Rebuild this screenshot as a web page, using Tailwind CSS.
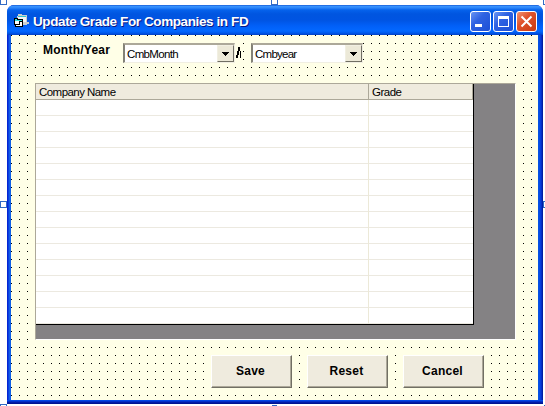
<!DOCTYPE html>
<html lang="en">
<head>
<meta charset="utf-8">
<title>Update Grade For Companies in FD</title>
<script src="https://cdn.jsdelivr.net/npm/@tailwindcss/browser@4"></script>
</head>
<body class="bg-white overflow-hidden text-black">
<div class="relative w-[545px] h-[406px] overflow-hidden pl-[7px] pt-[5px] font-['Liberation_Sans',sans-serif]">
  <!-- designer selection handles -->
  <i class="absolute left-0 -top-[2px] size-[7px] border border-[#316ac5] bg-white"></i>
  <i class="absolute left-[271px] -top-[2px] size-[7px] border border-[#316ac5] bg-white"></i>
  <i class="absolute left-[543px] -top-[2px] size-[7px] border border-[#316ac5] bg-white"></i>
  <i class="absolute left-0 top-[201px] size-[7px] border border-[#316ac5] bg-white"></i>
  <i class="absolute left-[543px] top-[201px] size-[7px] border border-[#316ac5] bg-white"></i>
  <i class="absolute left-0 top-[404px] size-[7px] border border-[#316ac5] bg-white"></i>
  <i class="absolute left-[272px] top-[405px] w-[5px] h-px bg-[#316ac5]"></i>
  <i class="absolute left-[544px] top-[405px] size-px bg-[#316ac5]"></i>

  <div class="relative w-[536px] h-[399px] rounded-t-[7px] overflow-hidden bg-[#0831d9] flex flex-col">
    <header class="h-[30px] shrink-0 flex items-center pl-[7px] pr-[6px] bg-[linear-gradient(to_bottom,#0a48c8_0px,#3c96ff_1px,#2a83f8_3px,#0562ec_5px,#0055e0_9px,#0054e2_15px,#0160f8_21px,#0368ff_26px,#0058ec_28px,#0240c4_30px)]">
      <svg class="w-[15px] h-[14px] shrink-0 mt-[2px]" viewBox="0 0 15 14" shape-rendering="crispEdges">
        <path d="M4 0h4v1h5v7h2v2h-2v1H8V8H3V2h1z" fill="#c8ced0"/>
        <path d="M4 2h8v1H4z" fill="#30c8d0"/>
        <path d="M4 3h8v5H4z" fill="#f4f4f4"/>
        <path d="M0 4h4v1h5v8H1V11H0z" fill="#000"/>
        <path d="M1 5h2v1h5v1H1z" fill="#30e0e0"/>
        <path d="M1 7h4v3H1zM6 8h2v4H2v-1h4z" fill="#fff"/>
      </svg>
      <h1 class="ml-[4px] mt-[4px] text-white font-bold text-[13.5px] leading-[18px] whitespace-nowrap [text-shadow:1px_1px_0_#0a1883] w-[220px] tracking-[-0.4px]">Update Grade For Companies in FD</h1>
      <div class="ml-auto flex gap-[2px] mt-[3px]">
        <svg class="w-[21px] h-[21px]" viewBox="0 0 21 21"><defs><linearGradient id="b" x2="1" y2="1"><stop stop-color="#6d98f4"/><stop offset=".4" stop-color="#2f62e2"/><stop offset="1" stop-color="#1c4fd6"/></linearGradient><linearGradient id="r" x2="1" y2="1"><stop stop-color="#f09878"/><stop offset=".4" stop-color="#e0532c"/><stop offset="1" stop-color="#c83a10"/></linearGradient></defs><rect x=".5" y=".5" width="20" height="20" rx="2.5" fill="url(#b)" stroke="#fff"/><path d="M5 13h7v3H5z" fill="#fff"/></svg>
        <svg class="w-[21px] h-[21px]" viewBox="0 0 21 21"><rect x=".5" y=".5" width="20" height="20" rx="2.5" fill="url(#b)" stroke="#fff"/><path d="M5 5h11v11H5zM6 8v7h9V8z" fill="#fff" fill-rule="evenodd"/></svg>
        <svg class="w-[21px] h-[21px]" viewBox="0 0 21 21"><rect x=".5" y=".5" width="20" height="20" rx="2.5" fill="url(#r)" stroke="#fff"/><path d="M5.5 5.5l10 10M15.5 5.5l-10 10" stroke="#fff" stroke-width="2"/></svg>
      </div>
    </header>

    <div class="flex h-[369px] pb-[4px] px-[4px] bg-[linear-gradient(to_right,#0019cf_0px,#0831d9_1px,#166aee_3px,#0855dd_4px,#0855dd_531px,#0450e8_532px,#0838d8_534px,#001590_536px)]">
      <main class="w-[527px] h-[365px] bg-[#ffffe7] relative">
        <svg class="absolute inset-0 w-[527px] h-[365px]" shape-rendering="crispEdges"><defs><pattern id="d" width="8" height="8" patternUnits="userSpaceOnUse"><rect width="1" height="1"/></pattern></defs><rect width="527" height="365" fill="url(#d)"/></svg>
        <div class="relative pl-[25px] pt-[8px]">
          <div class="flex h-[20px] w-[327px]">
            <label class="w-[87px] pl-[7px] bg-[#ffffe7] text-[12px] font-bold leading-[14px] whitespace-nowrap tracking-[0.25px]">Month/Year</label>
            <div class="w-[112px] h-[20px] bg-white border-t-2 border-l-2 border-b border-r border-t-[#aca899] border-l-[#848278] border-b-[#f1efe2] border-r-[#f1efe2] flex justify-between pl-[2px]">
              <span class="text-[11.5px] leading-[19px] tracking-[-0.65px]">CmbMonth</span>
              <span class="w-[17px] h-[17px] bg-[#ece9d8] border border-l-[#f1efe2] border-t-[#f1efe2] border-r-[#716f64] border-b-[#716f64] flex items-center justify-center"><svg class="w-[7px] h-[4px]" viewBox="0 0 7 4" shape-rendering="crispEdges"><path d="M0 0h7v1H6v1H5v1H4v1H3V3H2V2H1V1H0z"/></svg></span>
            </div>
            <span class="w-[7px] bg-[#ffffe7] overflow-hidden flex"><svg class="w-[6px] h-[14px] mt-[3px]" viewBox="0 0 6 14" shape-rendering="crispEdges"><path d="M3 1h2v4H4v4H3v3H1V9h1V5h1zM5 5h1v7H5z"/></svg></span>
            <span class="w-[9px]"></span>
            <div class="w-[112px] h-[20px] bg-white border-t-2 border-l-2 border-b border-r border-t-[#aca899] border-l-[#848278] border-b-[#f1efe2] border-r-[#f1efe2] flex justify-between pl-[2px]">
              <span class="text-[11.5px] leading-[19px] tracking-[-0.75px]">Cmbyear</span>
              <span class="w-[17px] h-[17px] bg-[#ece9d8] border border-l-[#f1efe2] border-t-[#f1efe2] border-r-[#716f64] border-b-[#716f64] flex items-center justify-center"><svg class="w-[7px] h-[4px]" viewBox="0 0 7 4" shape-rendering="crispEdges"><path d="M0 0h7v1H6v1H5v1H4v1H3V3H2V2H1V1H0z"/></svg></span>
            </div>
          </div>

          <div class="mt-[20px] -ml-px w-[481px] h-[257px] bg-[#848284] border border-[#aca899] border-b-white border-r-white">
            <div class="w-[438px] h-[241px] bg-white border-r border-b border-black bg-[repeating-linear-gradient(to_bottom,transparent_0px,transparent_15px,#ece9e0_15px,#ece9e0_16px)] flex text-[11.5px] leading-[16px] tracking-[-0.5px]">
              <div class="w-[333px] border-r border-[#ece9d8]"><div class="h-[16px] w-[333px] bg-[#efebde] border-b border-r border-[#aca899] pl-[3px] tracking-[-0.55px]">Company Name</div></div>
              <div class="grow"><div class="h-[16px] bg-[#efebde] border-b border-r border-[#aca899] pl-[3px]">Grade</div></div>
            </div>
          </div>

          <div class="mt-[15px] ml-[175px] flex gap-[15px] text-[12px] font-bold tracking-[0.25px] leading-[31px] text-center">
            <button class="w-[81px] h-[33px] pr-[2px] bg-[#efebde] border-t border-l border-white border-r-[#716f64] border-b-[#716f64] border-r border-b shadow-[inset_-1px_-1px_0_#aca899]">Save</button>
            <button class="w-[81px] h-[33px] pr-[2px] bg-[#efebde] border-t border-l border-white border-r-[#716f64] border-b-[#716f64] border-r border-b shadow-[inset_-1px_-1px_0_#aca899]">Reset</button>
            <button class="w-[81px] h-[33px] pr-[2px] bg-[#efebde] border-t border-l border-white border-r-[#716f64] border-b-[#716f64] border-r border-b shadow-[inset_-1px_-1px_0_#aca899]">Cancel</button>
          </div>
        </div>
      </main>
    </div>
    <div class="absolute left-0 bottom-0 w-full h-[4px] bg-[linear-gradient(to_bottom,#0450e8_0px,#0440e0_1px,#0420b0_2px,#001088_4px)]"></div>
  </div>
</div>
</body>
</html>
